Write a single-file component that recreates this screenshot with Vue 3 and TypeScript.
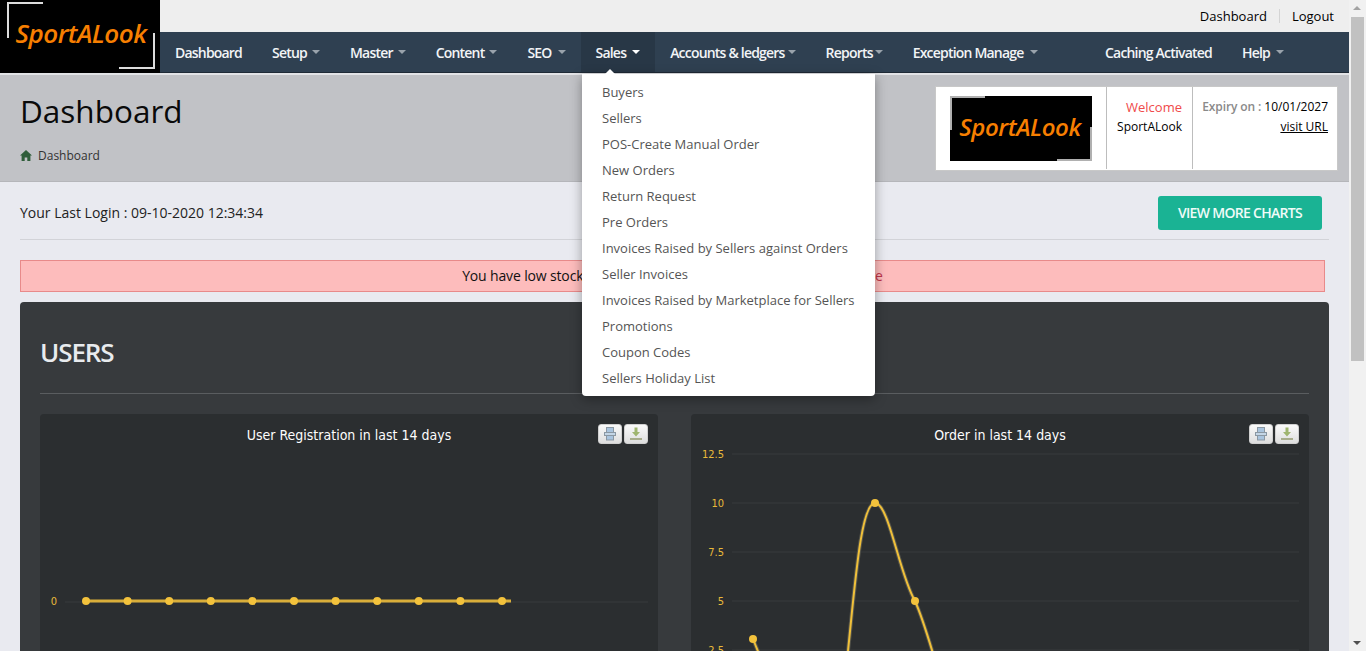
<script setup lang="ts">
interface NavItem {
  label: string;
  caretGap?: number;
  active?: boolean;
}

const navLeft: NavItem[] = [
  { label: "Dashboard" },
  { label: "Setup", caretGap: 5 },
  { label: "Master", caretGap: 5 },
  { label: "Content", caretGap: 5 },
  { label: "SEO", caretGap: 6 },
  { label: "Sales", caretGap: 6, active: true },
  { label: "Accounts & ledgers", caretGap: 3 },
  { label: "Reports", caretGap: 2 },
  { label: "Exception Manage", caretGap: 6 },
];

const salesMenu = [
  "Buyers",
  "Sellers",
  "POS-Create Manual Order",
  "New Orders",
  "Return Request",
  "Pre Orders",
  "Invoices Raised by Sellers against Orders",
  "Seller Invoices",
  "Invoices Raised by Marketplace for Sellers",
  "Promotions",
  "Coupon Codes",
  "Sellers Holiday List",
];

const userPoints = Array.from({ length: 11 }, (_, i) => 46 + i * 41.6);
const orderGrid = [
  { y: 40, label: "12.5" },
  { y: 89, label: "10" },
  { y: 138, label: "7.5" },
  { y: 187, label: "5" },
  { y: 236, label: "2.5" },
];
const orderPoints = [
  { x: 62, y: 225 },
  { x: 184, y: 89 },
  { x: 224, y: 187 },
];
const orderCurve =
  "M62 225 C72 250 92 300 112 320 C140 330 150 260 157 237 C164 170 170 89 184 89 C198 89 208 160 224 187 C232 205 238 225 248 260";
</script>

<template>
  <div class="screen">
    <div class="page">
      <header class="header">
        <a class="logo">
          <span class="logo-corner logo-corner--tl"></span>
          <span class="logo-text">SportALook</span>
          <span class="logo-corner logo-corner--br"></span>
        </a>
        <div class="header-right">
          <div class="topbar">
            <a>Dashboard</a>
            <span class="topbar-sep"></span>
            <a>Logout</a>
          </div>
          <nav class="nav">
            <a
              v-for="item in navLeft"
              :key="item.label"
              class="nav-item"
              :class="{ 'is-active': item.active }"
            >
              {{ item.label }}<i v-if="item.caretGap" class="caret" :style="{ marginLeft: `${item.caretGap}px` }"></i>
            </a>
            <span class="nav-spacer"></span>
            <a class="nav-item">Caching Activated</a>
            <a class="nav-item nav-item--help">Help<i class="caret"></i></a>
          </nav>
        </div>
      </header>

      <ul class="sales-menu">
        <li v-for="entry in salesMenu" :key="entry">{{ entry }}</li>
      </ul>

      <section class="page-head">
        <div class="page-head-left">
          <h1>Dashboard</h1>
          <div class="crumb">
            <svg width="12" height="11" viewBox="0 0 12 11">
              <path d="M6 0 L12 5.6 L10.4 5.6 L10.4 11 L7.3 11 L7.3 7.4 L4.7 7.4 L4.7 11 L1.6 11 L1.6 5.6 L0 5.6 Z" fill="#2f5d3a" />
            </svg>
            <span>Dashboard</span>
          </div>
        </div>
        <div class="account">
          <div class="account-logo">
            <div class="mini-logo">
              <span class="mini-corner mini-corner--tl"></span>
              <span class="mini-text">SportALook</span>
              <span class="mini-corner mini-corner--br"></span>
            </div>
          </div>
          <div class="account-welcome">
            <div class="welcome">Welcome</div>
            <div>SportALook</div>
          </div>
          <div class="account-expiry">
            <div><span class="expiry-label">Expiry on : </span>10/01/2027</div>
            <a class="visit">visit URL</a>
          </div>
        </div>
      </section>

      <main class="content">
        <div class="login-row">
          <span class="login-text">Your Last Login : 09-10-2020 12:34:34</span>
          <button class="charts-btn" type="button">VIEW MORE CHARTS</button>
        </div>
        <div class="alert">You have low stocks of some products. <span class="alert-link">Please click here to update</span></div>

        <section class="panel">
          <h2>USERS</h2>
          <div class="chart-grid">
            <article class="chart">
              <div class="chart-title">User Registration in last 14 days</div>
              <div class="chart-tools">
                <button type="button" class="tool">
                  <svg width="14" height="14" viewBox="0 0 14 14">
                    <rect x="3.500" y="0.500" width="7" height="5" fill="#a9c4de" stroke="#8b98a3" />
                    <rect x="1.500" y="5.500" width="11" height="3" fill="#c4d6e6" stroke="#8b98a3" />
                    <rect x="3.500" y="8.500" width="7" height="4.500" fill="#a9c4de" stroke="#8b98a3" />
                  </svg>
                </button>
                <button type="button" class="tool">
                  <svg width="14" height="14" viewBox="0 0 14 14">
                    <path d="M5.5 0.500 H8.500 V5 H11 L7 9.500 L3 5 H5.500 Z" fill="#9fb56f" />
                    <rect x="1" y="11" width="12" height="2" fill="#a8ad8c" />
                  </svg>
                </button>
              </div>
              <svg class="chart-svg" width="618" height="300" viewBox="0 0 618 300">
                <line x1="25" y1="188" x2="608" y2="188" class="grid-line" />
                <text x="17" y="191" text-anchor="end" class="axis-label">0</text>
                <line x1="46" y1="187" x2="471" y2="187" class="series series--flat" />
                <circle v-for="x in userPoints" :key="x" :cx="x" cy="187" r="4" class="dot" />
              </svg>
            </article>

            <article class="chart">
              <div class="chart-title">Order in last 14 days</div>
              <div class="chart-tools">
                <button type="button" class="tool">
                  <svg width="14" height="14" viewBox="0 0 14 14">
                    <rect x="3.500" y="0.500" width="7" height="5" fill="#a9c4de" stroke="#8b98a3" />
                    <rect x="1.500" y="5.500" width="11" height="3" fill="#c4d6e6" stroke="#8b98a3" />
                    <rect x="3.500" y="8.500" width="7" height="4.500" fill="#a9c4de" stroke="#8b98a3" />
                  </svg>
                </button>
                <button type="button" class="tool">
                  <svg width="14" height="14" viewBox="0 0 14 14">
                    <path d="M5.5 0.500 H8.500 V5 H11 L7 9.500 L3 5 H5.500 Z" fill="#9fb56f" />
                    <rect x="1" y="11" width="12" height="2" fill="#a8ad8c" />
                  </svg>
                </button>
              </div>
              <svg class="chart-svg" width="618" height="300" viewBox="0 0 618 300">
                <g v-for="row in orderGrid" :key="row.label">
                  <line x1="41" :y1="row.y" x2="608" :y2="row.y" class="grid-line" />
                  <text x="33" :y="row.y + 4" text-anchor="end" class="axis-label">{{ row.label }}</text>
                </g>
                <path :d="orderCurve" class="series series--shadow" fill="none" />
                <path :d="orderCurve" class="series" fill="none" />
                <circle v-for="p in orderPoints" :key="p.x" :cx="p.x" :cy="p.y" r="4" class="dot" />
              </svg>
            </article>
          </div>
        </section>
      </main>
    </div>

    <div class="scrollbar">
      <span class="arrow arrow--up"></span>
      <span class="thumb"></span>
      <span class="arrow arrow--down"></span>
    </div>
  </div>
</template>

<style>
html,
body {
  margin: 0;
  overflow: hidden;
}
</style>

<style scoped>
.screen {
  display: flex;
  height: 651px;
  overflow: hidden;
  font-family: "Open Sans", "Liberation Sans", sans-serif;
  font-size: 13px;
  color: #000;
}

.page {
  position: relative;
  width: 1349px;
  flex: none;
  overflow: hidden;
  background: #e9eaf0;
}

/* header */
.header {
  display: flex;
  height: 73px;
  border-bottom: 2px solid #e2e3e6;
  box-sizing: content-box;
}

.logo {
  position: relative;
  display: flex;
  align-items: center;
  justify-content: center;
  flex: none;
  width: 160px;
  height: 73px;
  background: #000;
}

.logo-text {
  color: #f77f00;
  font-size: 26px;
  font-style: italic;
  font-weight: 600;
  letter-spacing: -0.5px;
  margin-top: -8px;
  margin-left: 2px;
}

.logo-corner {
  position: absolute;
  width: 34px;
  height: 34px;
  border: 0 solid #dcdcdc;
}

.logo-corner--tl {
  left: 7px;
  top: 2px;
  border-width: 2px 0 0 2px;
}

.logo-corner--br {
  right: 5px;
  bottom: 4px;
  border-width: 0 2px 2px 0;
}

.header-right {
  flex: 1;
  display: flex;
  flex-direction: column;
  min-width: 0;
}

.topbar {
  display: flex;
  align-items: center;
  justify-content: flex-end;
  height: 33px;
  padding-right: 15px;
  background: #eeeeee;
  font-size: 13px;
}

.topbar-sep {
  width: 1px;
  height: 14px;
  margin: 0 12px;
  background: #d4d4d4;
}

.nav {
  display: flex;
  background: #2f4051;
  border-bottom: 1px solid #1f2a36;
  box-sizing: border-box;
  height: 41px;
}

.nav-item {
  display: flex;
  align-items: center;
  height: 40px;
  padding: 0 15px;
  color: #f2f4f6;
  font-size: 14px;
  font-weight: 600;
  letter-spacing: -0.8px;
  white-space: nowrap;
}

.nav-item.is-active {
  background: #283746;
}

.nav-item.is-active .caret {
  border-top-color: #fff;
}

.nav-item--help {
  padding-right: 65px;
}

.nav-spacer {
  flex: 1;
}

.caret {
  display: inline-block;
  width: 0;
  height: 0;
  margin-left: 6px;
  border-top: 4px solid #9aa3ac;
  border-left: 4px solid transparent;
  border-right: 4px solid transparent;
}

/* sales dropdown */
.sales-menu {
  position: absolute;
  z-index: 5;
  left: 582px;
  top: 74px;
  width: 293px;
  margin: 0;
  padding: 5px 0;
  list-style: none;
  background: #fff;
  border-radius: 0 0 4px 4px;
  box-shadow: 0 3px 12px rgba(0, 0, 0, 0.35);
  color: #555;
  font-size: 13px;
}

.sales-menu::before {
  content: "";
  position: absolute;
  left: 23px;
  top: -5px;
  border-bottom: 5px solid #fff;
  border-left: 5px solid transparent;
  border-right: 5px solid transparent;
}

.sales-menu li {
  height: 26px;
  line-height: 26px;
  padding: 0 20px;
  white-space: nowrap;
}

/* page head */
.page-head {
  display: flex;
  justify-content: space-between;
  height: 107px;
  padding: 11px 11px 0 20px;
  box-sizing: border-box;
  background: #c1c2c6;
  border-bottom: 1px solid #b5b6ba;
}

.page-head h1 {
  margin: 0;
  font-size: 31.500px;
  font-weight: 400;
  line-height: 50px;
  color: #0a0a0a;
}

.crumb {
  display: flex;
  align-items: center;
  gap: 6px;
  margin-top: 11px;
  font-size: 12px;
  color: #333;
}

.account {
  display: flex;
  width: 403px;
  height: 85px;
  box-sizing: border-box;
  background: #fff;
  border: 1px solid #c8c8c8;
  font-size: 12px;
}

.account-logo {
  width: 171px;
  flex: none;
  padding: 9px 14px;
  box-sizing: border-box;
  border-right: 1px solid #bdbdbd;
  margin-bottom: 1px;
}

.mini-logo {
  position: relative;
  display: flex;
  align-items: center;
  justify-content: center;
  width: 142px;
  height: 65px;
  background: #000;
}

.mini-text {
  color: #f77f00;
  font-size: 24px;
  font-style: italic;
  font-weight: 600;
  letter-spacing: -0.4px;
  margin-top: -4px;
  margin-left: -2px;
}

.mini-corner {
  position: absolute;
  width: 33px;
  height: 32px;
  border: 0 solid #b0b0b0;
}

.mini-corner--tl {
  left: 0;
  top: 0;
  border-width: 2px 0 0 2px;
}

.mini-corner--br {
  right: 0;
  bottom: 0;
  border-width: 0 2px 2px 0;
}

.account-welcome {
  width: 86px;
  flex: none;
  padding: 10px 10px 0 0;
  box-sizing: border-box;
  border-right: 1px solid #bdbdbd;
  margin-bottom: 1px;
  text-align: right;
  line-height: 20px;
}

.welcome {
  color: #f04a4a;
  font-size: 13px;
}

.account-expiry {
  flex: 1;
  padding: 10px 9px 0 0;
  text-align: right;
  line-height: 20px;
}

.expiry-label {
  color: #8a8a8a;
  font-weight: 600;
  letter-spacing: -0.1px;
}

.visit {
  text-decoration: underline;
}

/* content */
.content {
  padding: 0 20px;
}

.login-row {
  display: flex;
  align-items: center;
  justify-content: space-between;
  height: 58px;
  padding: 5px 7px 0 0;
  box-sizing: border-box;
  border-bottom: 1px solid #d2d3d8;
  font-size: 14px;
  color: #222;
}

.login-text {
  margin-bottom: 2px;
}

.charts-btn {
  width: 164px;
  height: 34px;
  padding: 0 0 2px;
  border: none;
  border-radius: 3px;
  background: #1ab394;
  color: #f0fbf8;
  font-family: inherit;
  font-size: 14px;
  font-weight: 600;
  letter-spacing: -0.7px;
}

.alert {
  height: 32px;
  margin: 20px 4px 10px 0;
  box-sizing: border-box;
  background: #fdbcbc;
  border: 1px solid #e88a8a;
  color: #111;
  font-size: 14px;
  line-height: 30px;
  text-align: center;
  letter-spacing: -0.15px;
}

.alert-link {
  color: #c0344a;
}

.panel {
  height: 400px;
  padding: 0 20px;
  background: #373a3d;
  border-radius: 4px;
}

.panel h2 {
  height: 92px;
  margin: 0 0 20px;
  box-sizing: border-box;
  padding-top: 32px;
  border-bottom: 1px solid #5a5d60;
  color: #e8ebee;
  font-size: 26px;
  font-weight: 600;
  line-height: 36px;
  letter-spacing: -1.100px;
}

.chart-grid {
  display: grid;
  grid-template-columns: 618px 618px;
  justify-content: space-between;
}

.chart {
  position: relative;
  height: 300px;
  background: #2b2e30;
  border-radius: 4px;
}

.chart-title {
  position: absolute;
  left: 0;
  right: 0;
  top: 12px;
  text-align: center;
  color: #fdfdfd;
  font-family: "DejaVu Sans Condensed", "DejaVu Sans", sans-serif;
  font-size: 14px;
  line-height: 18px;
}

.chart-tools {
  position: absolute;
  right: 10px;
  top: 10px;
  display: flex;
  gap: 2px;
}

.tool {
  display: flex;
  align-items: center;
  justify-content: center;
  width: 24px;
  height: 20px;
  padding: 0;
  border: 1px solid #d0d0d0;
  border-radius: 3px;
  background: linear-gradient(#fafafa, #dedede);
}

.chart-svg {
  display: block;
}

.grid-line {
  stroke: #383b3d;
  stroke-width: 1;
}

.axis-label {
  fill: #e8b93a;
  font-family: "DejaVu Sans Condensed", "DejaVu Sans", sans-serif;
  font-size: 11px;
}

.series {
  stroke: #f0c03a;
  stroke-width: 2;
}

.series--flat {
  stroke-width: 3;
  stroke: #d9ae3a;
}

.series--shadow {
  stroke: #55544a;
  stroke-width: 4;
}

.dot {
  fill: #f3c23c;
}

/* fake scrollbar */
.scrollbar {
  position: relative;
  flex: none;
  width: 17px;
  background: #f1f1f1;
}

.thumb {
  position: absolute;
  left: 2px;
  right: 2px;
  top: 17px;
  height: 344px;
  background: #c1c1c1;
}

.arrow {
  position: absolute;
  left: 4px;
  border-left: 4px solid transparent;
  border-right: 4px solid transparent;
}

.arrow--up {
  top: 6px;
  border-bottom: 4px solid #a3a3a3;
}

.arrow--down {
  bottom: 6px;
  border-top: 4px solid #505050;
}
</style>
